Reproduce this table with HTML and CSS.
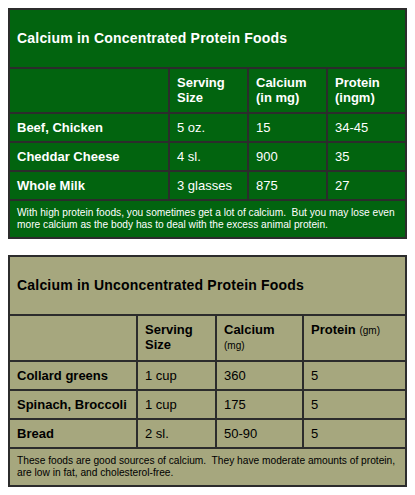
FILE: index.html
```html
<!DOCTYPE html>
<html>
<head>
<meta charset="utf-8">
<link rel="stylesheet" href="styles.css">
</head>
<body>
<table class="tbl tbl-green">
  <colgroup>
    <col class="c1a"><col class="c2a"><col class="c3a"><col class="c4a">
  </colgroup>
  <tr><td class="title" colspan="4">Calcium in Concentrated Protein Foods</td></tr>
  <tr class="head"><td></td><td>Serving Size</td><td>Calcium (in mg)</td><td>Protein (ingm)</td></tr>
  <tr class="row"><td class="name">Beef, Chicken</td><td>5 oz.</td><td>15</td><td>34-45</td></tr>
  <tr class="row"><td class="name">Cheddar Cheese</td><td>4 sl.</td><td>900</td><td>35</td></tr>
  <tr class="row"><td class="name">Whole Milk</td><td>3 glasses</td><td>875</td><td>27</td></tr>
  <tr><td class="note" colspan="4">With high protein foods, you sometimes get a lot of calcium.&nbsp; But you may lose even more calcium as the body has to deal with the excess animal protein.</td></tr>
</table>
<table class="tbl tbl-olive">
  <colgroup>
    <col class="c1b"><col class="c2b"><col class="c3b"><col class="c4b">
  </colgroup>
  <tr><td class="title" colspan="4">Calcium in Unconcentrated Protein Foods</td></tr>
  <tr class="head"><td></td><td>Serving Size</td><td>Calcium<br><span class="unit">(mg)</span></td><td>Protein <span class="unit">(gm)</span></td></tr>
  <tr class="row"><td class="name">Collard greens</td><td>1 cup</td><td>360</td><td>5</td></tr>
  <tr class="row"><td class="name">Spinach, Broccoli</td><td>1 cup</td><td>175</td><td>5</td></tr>
  <tr class="row"><td class="name">Bread</td><td>2 sl.</td><td>50-90</td><td>5</td></tr>
  <tr><td class="note" colspan="4">These foods are good sources of calcium.&nbsp; They have moderate amounts of protein, are low in fat, and cholesterol-free.</td></tr>
</table>
</body>
</html>
```
FILE: styles.css
```css
html, body {
  background: #ffffff;
}
body {
  margin: 8px;
  font-family: "Liberation Sans", Arial, sans-serif;
  font-size: 13px;
}
.tbl {
  width: 100%;
  border-collapse: collapse;
  table-layout: fixed;
  border: 2px solid #2c2c2c;
  margin: 0 0 16px 0;
}
.tbl td {
  border: 2px solid #2c2c2c;
  padding: 6px 7px;
  line-height: 15px;
  vertical-align: middle;
}
.tbl-green {
  background: #02640f;
  color: #ffffff;
}
.tbl-olive {
  background: #a6a77e;
  color: #000000;
}
.c1a { width: 160px; }
.c2a { width: 79px; }
.c3a { width: 79px; }
.c4a { width: auto; }
.c1b { width: 128px; }
.c2b { width: 79px; }
.c3b { width: 87px; }
.c4b { width: auto; }
.tbl td.title {
  font-weight: bold;
  font-size: 14px;
  letter-spacing: 0.2px;
  padding-top: 21px;
  padding-bottom: 21px;
}
.head td {
  font-weight: bold;
  vertical-align: top;
}
.tbl .head td {
  padding-bottom: 7px;
}
.name {
  font-weight: bold;
}
.unit {
  font-weight: normal;
  font-size: 10px;
}
.tbl td.note {
  font-size: 10.2px;
  line-height: 12px;
}
```
